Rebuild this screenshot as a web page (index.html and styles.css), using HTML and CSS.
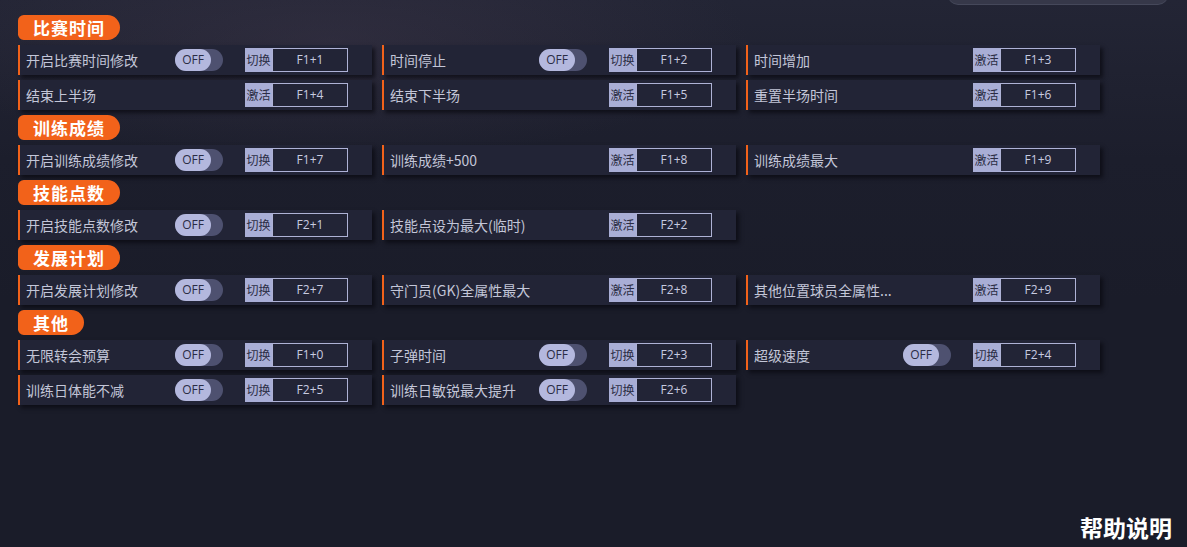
FILE: index.html
```html
<!DOCTYPE html>
<html lang="zh-CN">

<head>
  <meta charset="UTF-8" />
  <title>修改器</title>
  <link rel="stylesheet" href="styles.css">
</head>

<body>
  <div class="top-search"></div>

  <main id="panel">
    <!-- 比赛时间 -->
    <section class="group">
      <h2 class="group-title">比赛时间</h2>
      <div class="grid">
        <div class="cell">
          <span class="label">开启比赛时间修改</span>
          <span class="toggle"><span class="knob">OFF</span></span>
          <span class="key"><span class="act">切换</span><span class="combo">F1+1</span></span>
        </div>
        <div class="cell">
          <span class="label">时间停止</span>
          <span class="toggle"><span class="knob">OFF</span></span>
          <span class="key"><span class="act">切换</span><span class="combo">F1+2</span></span>
        </div>
        <div class="cell">
          <span class="label">时间增加</span>
          <span class="key"><span class="act">激活</span><span class="combo">F1+3</span></span>
        </div>
        <div class="cell">
          <span class="label">结束上半场</span>
          <span class="key"><span class="act">激活</span><span class="combo">F1+4</span></span>
        </div>
        <div class="cell">
          <span class="label">结束下半场</span>
          <span class="key"><span class="act">激活</span><span class="combo">F1+5</span></span>
        </div>
        <div class="cell">
          <span class="label">重置半场时间</span>
          <span class="key"><span class="act">激活</span><span class="combo">F1+6</span></span>
        </div>
      </div>
    </section>

    <!-- 训练成绩 -->
    <section class="group">
      <h2 class="group-title">训练成绩</h2>
      <div class="grid">
        <div class="cell">
          <span class="label">开启训练成绩修改</span>
          <span class="toggle"><span class="knob">OFF</span></span>
          <span class="key"><span class="act">切换</span><span class="combo">F1+7</span></span>
        </div>
        <div class="cell">
          <span class="label">训练成绩+500</span>
          <span class="key"><span class="act">激活</span><span class="combo">F1+8</span></span>
        </div>
        <div class="cell">
          <span class="label">训练成绩最大</span>
          <span class="key"><span class="act">激活</span><span class="combo">F1+9</span></span>
        </div>
      </div>
    </section>

    <!-- 技能点数 -->
    <section class="group">
      <h2 class="group-title">技能点数</h2>
      <div class="grid">
        <div class="cell">
          <span class="label">开启技能点数修改</span>
          <span class="toggle"><span class="knob">OFF</span></span>
          <span class="key"><span class="act">切换</span><span class="combo">F2+1</span></span>
        </div>
        <div class="cell">
          <span class="label">技能点设为最大(临时)</span>
          <span class="key"><span class="act">激活</span><span class="combo">F2+2</span></span>
        </div>
      </div>
    </section>

    <!-- 发展计划 -->
    <section class="group">
      <h2 class="group-title">发展计划</h2>
      <div class="grid">
        <div class="cell">
          <span class="label">开启发展计划修改</span>
          <span class="toggle"><span class="knob">OFF</span></span>
          <span class="key"><span class="act">切换</span><span class="combo">F2+7</span></span>
        </div>
        <div class="cell">
          <span class="label">守门员(GK)全属性最大</span>
          <span class="key"><span class="act">激活</span><span class="combo">F2+8</span></span>
        </div>
        <div class="cell">
          <span class="label">其他位置球员全属性...</span>
          <span class="key"><span class="act">激活</span><span class="combo">F2+9</span></span>
        </div>
      </div>
    </section>

    <!-- 其他 -->
    <section class="group">
      <h2 class="group-title short">其他</h2>
      <div class="grid">
        <div class="cell">
          <span class="label">无限转会预算</span>
          <span class="toggle"><span class="knob">OFF</span></span>
          <span class="key"><span class="act">切换</span><span class="combo">F1+0</span></span>
        </div>
        <div class="cell">
          <span class="label">子弹时间</span>
          <span class="toggle"><span class="knob">OFF</span></span>
          <span class="key"><span class="act">切换</span><span class="combo">F2+3</span></span>
        </div>
        <div class="cell">
          <span class="label">超级速度</span>
          <span class="toggle"><span class="knob">OFF</span></span>
          <span class="key"><span class="act">切换</span><span class="combo">F2+4</span></span>
        </div>
        <div class="cell">
          <span class="label">训练日体能不减</span>
          <span class="toggle"><span class="knob">OFF</span></span>
          <span class="key"><span class="act">切换</span><span class="combo">F2+5</span></span>
        </div>
        <div class="cell">
          <span class="label">训练日敏锐最大提升</span>
          <span class="toggle"><span class="knob">OFF</span></span>
          <span class="key"><span class="act">切换</span><span class="combo">F2+6</span></span>
        </div>
      </div>
    </section>
  </main>

  <a class="help" href="#">帮助说明</a>
</body>

</html>
```

FILE: styles.css
```css
/* --- Variables --- */
:root {
  --bg: #1a1c29;
  --cell-bg: #222436;
  --accent: #f2621a;
  --text: #c3c6d8;
  --key-label: #a9aed6;
  --key-border: #aeb2d6;
  --knob: #b4b8de;
  --track: #4e5170;
}

/* --- Base --- */
html,
body {
  height: 100%;
}

body {
  margin: 0;
  position: relative;
  overflow: hidden;
  font-family: "Noto Sans CJK SC", "Noto Sans", sans-serif;
  color: var(--text);
  background:
    radial-gradient(ellipse 420px 120px at 330px 40px, rgba(70, 60, 80, 0.35), transparent),
    linear-gradient(180deg, #232535 0px, #1c1e2c 160px, var(--bg) 300px);
}

/* bord de la barre de recherche en haut */
.top-search {
  position: absolute;
  top: -30px;
  left: 948px;
  width: 220px;
  height: 34px;
  border-radius: 10px;
  background: #363849;
  box-shadow: 0 1px 0 #45485a;
}

/* --- Layout --- */
#panel {
  padding: 15px 0 0 18px;
  display: flex;
  flex-direction: column;
  gap: 5px;
}

.group {
  display: flex;
  flex-direction: column;
  gap: 5px;
}

.group-title {
  margin: 0;
  width: 102px;
  height: 25px;
  box-sizing: border-box;
  padding-left: 15px;
  border-radius: 6px 13px 13px 6px;
  background: var(--accent);
  color: #fff;
  font-size: 17px;
  font-weight: bold;
  line-height: 25px;
  letter-spacing: 1px;
}

.group-title.short {
  width: 66px;
}

.grid {
  display: grid;
  grid-template-columns: repeat(3, 354px);
  column-gap: 10px;
  row-gap: 5px;
}

/* --- Cellules --- */
.cell {
  height: 30px;
  box-sizing: border-box;
  display: flex;
  align-items: center;
  padding: 0 24px 0 6px;
  border-left: 2px solid var(--accent);
  background: var(--cell-bg);
  box-shadow: 3px 3px 4px rgba(8, 9, 16, 0.7);
}

.label {
  flex: 1;
  font-size: 14px;
  white-space: nowrap;
  overflow: hidden;
}

/* --- Interrupteur --- */
.toggle {
  width: 48px;
  height: 22px;
  margin-right: 22px;
  border-radius: 11px;
  background: var(--track);
  display: flex;
}

.knob {
  width: 36px;
  height: 22px;
  border-radius: 11px;
  background: var(--knob);
  color: #2a2c45;
  font-family: "Open Sans", sans-serif;
  font-size: 12px;
  line-height: 22px;
  text-align: center;
}

/* --- Raccourci --- */
.key {
  display: flex;
  height: 24px;
}

.act {
  width: 27px;
  background: var(--key-label);
  color: #2b2d44;
  font-size: 12px;
  line-height: 24px;
  text-align: center;
}

.combo {
  width: 76px;
  box-sizing: border-box;
  border: 1px solid var(--key-border);
  color: #c8cbe0;
  font-family: "Open Sans", sans-serif;
  font-size: 12px;
  line-height: 22px;
  text-align: center;
}

/* --- Aide --- */
.help {
  position: absolute;
  right: 15px;
  bottom: 3px;
  color: #fff;
  font-size: 23px;
  font-weight: bold;
  text-decoration: none;
}
```
